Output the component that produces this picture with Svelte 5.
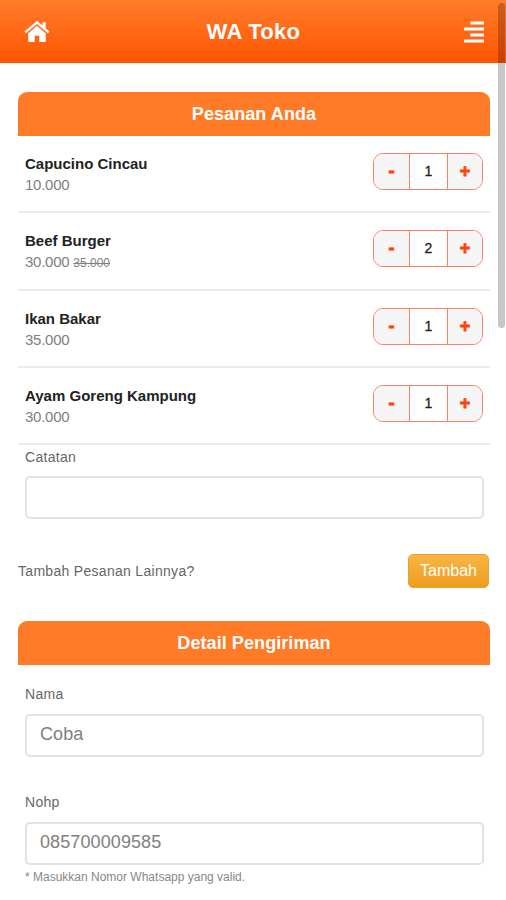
<script lang="ts">
	let items = $state([
		{ name: 'Capucino Cincau', price: '10.000', oldPrice: '', qty: 1 },
		{ name: 'Beef Burger', price: '30.000', oldPrice: '35.000', qty: 2 },
		{ name: 'Ikan Bakar', price: '35.000', oldPrice: '', qty: 1 },
		{ name: 'Ayam Goreng Kampung', price: '30.000', oldPrice: '', qty: 1 }
	]);

	let note = $state('');
	let name = $state('Coba');
	let phone = $state('085700009585');

	function change(i: number, step: number) {
		items[i].qty = Math.max(0, items[i].qty + step);
	}
</script>

<div class="page">
	<header class="topbar">
		<a class="nav-icon" href="#home" aria-label="Home">
			<svg width="26" height="22" viewBox="0 0 26 22">
				<path d="M13 4.8 4.2 12.6V20q0 1 1 1h5.5v-6.2h4.6V21h5.5q1 0 1-1v-7.4z" fill="#fff" />
				<path d="M18.5 1.2h3.2v6.5l-3.2-2.8z" fill="#fff" />
				<path d="M1.2 11.4 13 1.4l11.8 10" fill="none" stroke="#fff" stroke-width="2.4" />
				<path d="M2.9 12.9 13 4.2l10.1 8.7" fill="none" stroke="#ff8a4c" stroke-width="0.8" />
			</svg>
		</a>
		<h1>WA Toko</h1>
		<button class="nav-icon" aria-label="Menu">
			<svg width="20" height="22" viewBox="0 0 20 22" fill="#fff">
				<rect x="6.5" y="0.5" width="13.5" height="3" />
				<rect x="0" y="6.5" width="20" height="3" />
				<rect x="6.5" y="12.5" width="13.5" height="3" />
				<rect x="0" y="18.5" width="20" height="3" />
			</svg>
		</button>
	</header>

	<main>
		<h2>Pesanan Anda</h2>
		<ul class="items">
			{#each items as item, i}
				<li>
					<div>
						<div class="item-name">{item.name}</div>
						<div class="price">
							{item.price}
							{#if item.oldPrice}<s>{item.oldPrice}</s>{/if}
						</div>
					</div>
					<div class="stepper">
						<button aria-label="Kurang" onclick={() => change(i, -1)}>-</button>
						<span>{item.qty}</span>
						<button aria-label="Tambah" onclick={() => change(i, 1)}>+</button>
					</div>
				</li>
			{/each}
		</ul>

		<div class="field note">
			<label for="note">Catatan</label>
			<input id="note" bind:value={note} />
		</div>

		<div class="more">
			<span>Tambah Pesanan Lainnya?</span>
			<button>Tambah</button>
		</div>

		<h2>Detail Pengiriman</h2>
		<div class="field">
			<label for="name">Nama</label>
			<input id="name" bind:value={name} />
		</div>
		<div class="field phone">
			<label for="phone">Nohp</label>
			<input id="phone" bind:value={phone} />
			<small>* Masukkan Nomor Whatsapp yang valid.</small>
		</div>
	</main>

	<div class="scroll-thumb"></div>
</div>

<style>
	:global(body) {
		margin: 0;
		background: #fff;
	}

	.page {
		position: relative;
		height: 900px;
		overflow: hidden;
		font-family: 'Liberation Sans', Arial, sans-serif;
		color: #666;
	}

	.page * {
		box-sizing: border-box;
	}

	button,
	input {
		font-family: inherit;
		margin: 0;
	}

	.topbar {
		display: flex;
		align-items: center;
		justify-content: space-between;
		height: 63px;
		padding: 0 22px 0 24px;
		background: linear-gradient(#ff7c2b, #ff5500);
	}

	.nav-icon {
		display: flex;
		padding: 0;
		border: 0;
		background: none;
	}

	h1 {
		margin: 0;
		padding-right: 7px;
		font-size: 22px;
		line-height: 26px;
		letter-spacing: 0.3px;
		color: #fff;
	}

	main {
		padding: 29px 16px 0 18px;
	}

	h2 {
		margin: 0;
		height: 44px;
		border-radius: 9px 9px 0 0;
		background: #ff7b28;
		color: #fff;
		font-size: 18px;
		line-height: 45px;
		letter-spacing: 0.08px;
		text-align: center;
	}

	.items {
		margin: 0;
		padding: 0;
		list-style: none;
	}

	.items li {
		display: flex;
		justify-content: space-between;
		height: 77px;
		padding: 17px 7px 0 7px;
		border-bottom: 2px solid #ebebeb;
	}

	.items li:nth-child(2) {
		height: 78px;
	}

	.item-name {
		padding-top: 1px;
		font-size: 15px;
		font-weight: bold;
		line-height: 20px;
		color: #222;
	}

	.price {
		font-size: 15px;
		line-height: 22px;
		letter-spacing: -0.25px;
		color: #808080;
	}

	.price s {
		font-size: 12px;
		letter-spacing: 0;
	}

	.stepper {
		display: grid;
		grid-template-columns: 35px 39px 34px;
		width: 110px;
		height: 37px;
		border: 1px solid #fb8066;
		border-radius: 10px;
		overflow: hidden;
	}

	.stepper button {
		padding: 0;
		border: 0;
		background: #f5f5f5;
		color: #ff4208;
		font-size: 18px;
		font-weight: bold;
		-webkit-text-stroke: 0.8px #ff4208;
	}

	.stepper span {
		border: solid #fb8066;
		border-width: 0 1px;
		color: #222;
		font-size: 14px;
		line-height: 35px;
		text-align: center;
		-webkit-text-stroke: 0.3px #222;
	}

	.field {
		padding: 18px 6px 0 7px;
	}

	.field label {
		display: block;
		height: 31px;
		font-size: 14px;
		line-height: 22px;
		letter-spacing: 0.3px;
	}

	.field input {
		display: block;
		width: 100%;
		height: 43px;
		padding: 0 13px 2px;
		border: 2px solid #e0e3e4;
		border-radius: 5px;
		background: #fff;
		color: #808080;
		font-size: 18px;
		letter-spacing: 0.1px;
		outline: none;
	}

	.field.note {
		padding-top: 1px;
	}

	.field.note label {
		height: 30px;
	}

	.field.phone {
		padding-top: 34px;
	}

	.field small {
		display: block;
		padding-top: 3px;
		font-size: 12px;
		line-height: 18px;
		color: #888;
	}

	.more {
		display: flex;
		align-items: center;
		justify-content: space-between;
		padding: 35px 1px 33px 0;
		font-size: 14px;
		letter-spacing: 0.3px;
	}

	.more button {
		width: 81px;
		height: 34px;
		padding: 0;
		border: 1px solid #e9a12d;
		border-radius: 5px;
		background: linear-gradient(#fbb544, #ee9c20);
		color: #fff;
		font-size: 16px;
	}

	.scroll-thumb {
		position: absolute;
		top: 3px;
		right: 1px;
		width: 7px;
		height: 325px;
		border-radius: 4px;
		background: rgba(0, 0, 0, 0.22);
	}
</style>
